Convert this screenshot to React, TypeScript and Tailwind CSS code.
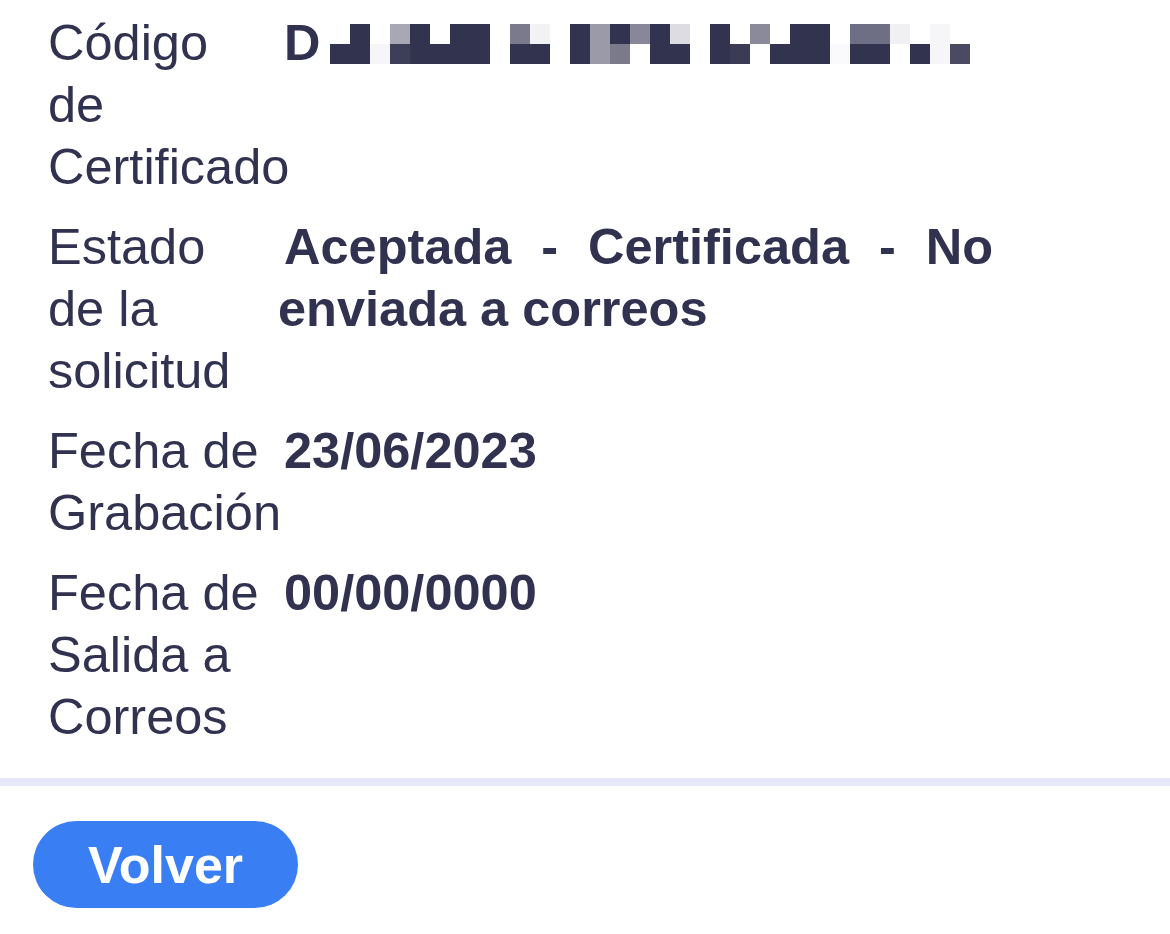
import React from "react";

const DARK = "#32334f";
const cells: [string, string][] = [
  ["#ffffff", DARK],
  [DARK, DARK],
  ["#ffffff", "#f6f6f8"],
  ["#a8a8b4", "#3d3e58"],
  [DARK, DARK],
  ["#ffffff", DARK],
  [DARK, DARK],
  [DARK, DARK],
  ["#ffffff", "#ffffff"],
  ["#7a7a8c", DARK],
  ["#f2f2f5", DARK],
  ["#ffffff", "#ffffff"],
  [DARK, DARK],
  ["#9a9aa8", "#9a9aa8"],
  [DARK, "#7a7a8a"],
  ["#878799", "#ffffff"],
  [DARK, DARK],
  ["#dcdce2", DARK],
  ["#ffffff", "#ffffff"],
  [DARK, DARK],
  ["#ffffff", "#3b3b55"],
  ["#8a8a9a", "#ffffff"],
  ["#ffffff", DARK],
  [DARK, DARK],
  [DARK, DARK],
  ["#ffffff", "#fafafc"],
  ["#6e6e84", DARK],
  ["#6e6e84", DARK],
  ["#f0f0f3", "#ffffff"],
  ["#ffffff", DARK],
  ["#f6f6f8", "#f6f6f8"],
  ["#ffffff", "#4a4a62"],
];

function Mosaic() {
  return (
    <svg width={640} height={40} viewBox="0 0 640 40" className="shrink-0 block" shapeRendering="crispEdges">
      {cells.map(([t, b], i) => (
        <g key={i}>
          <rect x={i * 20} y={0} width={20} height={20} fill={t} />
          <rect x={i * 20} y={20} width={20} height={20} fill={b} />
        </g>
      ))}
    </svg>
  );
}

function Row({ label, children }: { label: React.ReactNode; children: React.ReactNode }) {
  return (
    <div className="flex">
      <div className="w-[222px] shrink-0">{label}</div>
      <div className="ml-[8px] w-[715px] shrink-0 font-bold text-justify indent-[6px]">{children}</div>
    </div>
  );
}

export default function App() {
  return (
    <div
      className="min-h-[934px] w-[1170px] bg-white text-[#30324f] text-[50.5px] leading-[62px]"
      style={{ fontFamily: '"Liberation Sans", Arial, Helvetica, sans-serif' }}
    >
      <div className="flex flex-col gap-[18px] pt-[12px] pl-[48px]">
        <Row label={<>Código<br />de<br />Certificado</>}>
          <div className="flex items-start indent-0 pl-[6px]">
            <span>D</span>
            <div className="ml-[10px] mt-[12px]">
              <Mosaic />
            </div>
          </div>
        </Row>
        <Row label={<>Estado<br />de la<br />solicitud</>}>
          Aceptada - Certificada - No enviada a correos
        </Row>
        <Row label={<>Fecha de<br />Grabación</>}>23/06/2023</Row>
        <Row label={<>Fecha de<br />Salida a<br />Correos</>}>00/00/0000</Row>
      </div>
      <div className="mt-[30px] h-[8px] w-full bg-[#e7e7fa]" />
      <div className="pl-[33px] pt-[35px]">
        <button className="flex h-[87px] w-[265px] items-center justify-center rounded-full bg-[#3a7ef4] text-[52px] font-bold leading-none text-white">
          Volver
        </button>
      </div>
    </div>
  );
}
